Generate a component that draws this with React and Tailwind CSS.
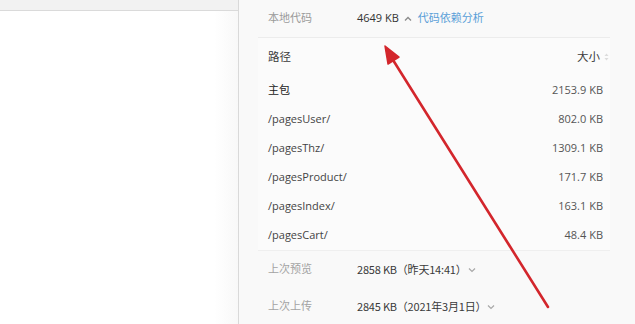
import React from 'react';

const rows = [
    { path: '主包', size: '2153.9 KB', strong: true },
    { path: '/pagesUser/', size: '802.0 KB' },
    { path: '/pagesThz/', size: '1309.1 KB' },
    { path: '/pagesProduct/', size: '171.7 KB' },
    { path: '/pagesIndex/', size: '163.1 KB' },
    { path: '/pagesCart/', size: '48.4 KB' },
];

const font = { fontFamily: '"Open Sans", "Noto Sans CJK SC", sans-serif' };
const cjk = { fontFamily: '"Noto Sans CJK SC", sans-serif' };

const ChevronUp = () => (
    <svg width="8" height="6" viewBox="0 0 8 6" className="ml-[5px] mr-[6px]">
        <path d="M1 4.5 L4 1.5 L7 4.5" fill="none" stroke="#8a8a8a" strokeWidth="1.3" />
    </svg>
);

const ChevronDown = () => (
    <svg width="8" height="6" viewBox="0 0 8 6" className="ml-[1px]">
        <path d="M1 1.5 L4 4.5 L7 1.5" fill="none" stroke="#a8a8a8" strokeWidth="1.2" />
    </svg>
);

const SortIcon = () => (
    <svg width="5" height="8" viewBox="0 0 5 8" className="ml-[4px]">
        <path d="M2.5 0.5 L4.5 3 L0.5 3 Z" fill="#dcdcdc" />
        <path d="M2.5 7.5 L4.5 5 L0.5 5 Z" fill="#dcdcdc" />
    </svg>
);

const App = () => {
    return (
        <div className="relative w-[635px] h-[324px] flex overflow-hidden text-[11px]" style={font}>
            {/* left editor area */}
            <div className="w-[239px] shrink-0 bg-white border-r border-[#d9d9d9] flex flex-col">
                <div className="h-[11px] bg-[#f2f2f2] border-b border-[#dadada]" />
                <div className="flex-1 bg-gradient-to-r from-white from-90% to-[#f8f8f8]" />
            </div>

            {/* right info panel */}
            <div className="flex-1 bg-[#f9f9f9] pl-[19px]">
                <div className="w-[352px]">
                    <div className="h-[38px] flex items-center pl-[10px] border-b border-[#ececec]">
                        <span className="w-[89px] text-[#9b9b9b]">本地代码</span>
                        <span className="text-[#333]">4649 KB</span>
                        <ChevronUp />
                        <span className="text-[#5a9fd8]">代码依赖分析</span>
                    </div>

                    <div className="bg-[#fbfbfb] border-b border-[#efefef]">
                        <div className="h-[38px] flex items-center justify-between pl-[10px] pr-[1px] text-[11.5px] text-[#3a3a3a]">
                            <span>路径</span>
                            <span className="flex items-center">大小<SortIcon /></span>
                        </div>
                        {rows.map((r) => (
                            <div key={r.path} className="h-[29px] flex items-center justify-between pl-[10px] pr-[7px]">
                                <span className={r.strong ? 'text-[#222]' : 'text-[#444]'}>{r.path}</span>
                                <span className="text-[#555]">{r.size}</span>
                            </div>
                        ))}
                    </div>

                    <div className="h-[37px] flex items-center pl-[10px]">
                        <span className="w-[89px] text-[#a3a3a3]">上次预览</span>
                        <span className="text-[#3a3a3a] tracking-[-0.2px]" style={cjk}>2858 KB（昨天14:41）</span>
                        <ChevronDown />
                    </div>
                    <div className="h-[37px] flex items-center pl-[10px]">
                        <span className="w-[89px] text-[#a3a3a3]">上次上传</span>
                        <span className="text-[#3a3a3a] tracking-[-0.2px]" style={cjk}>2845 KB（2021年3月1日）</span>
                        <ChevronDown />
                    </div>
                </div>
            </div>

            {/* red annotation arrow */}
            <svg className="absolute left-0 top-0 pointer-events-none" width="635" height="324" viewBox="0 0 635 324">
                <line x1="548" y1="307" x2="393" y2="60" stroke="#d3262c" strokeWidth="2.6" strokeLinecap="round" />
                <path d="M385 46 L399 57 L388 64 Z" fill="#d3262c" stroke="#d3262c" strokeWidth="1.5" strokeLinejoin="round" />
            </svg>
        </div>
    );
};

export default App;
